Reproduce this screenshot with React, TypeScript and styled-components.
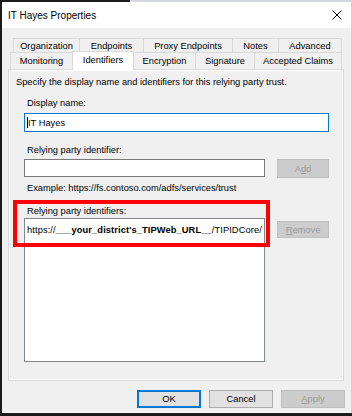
import * as React from "react";
import styled, { createGlobalStyle } from "styled-components";

const GlobalStyle = createGlobalStyle`
  html, body {
    margin: 0;
    padding: 0;
  }
  body {
    width: 352px;
    height: 416px;
    overflow: hidden;
    background: #1c1c1c;
    font-family: "Liberation Sans", Arial, sans-serif;
    color: #000;
  }
  * {
    box-sizing: border-box;
  }
`;

const Page = styled.div`
  display: flex;
  flex-direction: column;
  height: 416px;
`;

const TopStrip = styled.div`
  height: 2px;
  background: linear-gradient(to right, #1c1c1c 130px, #d4d8dc 130px);
`;

const Frame = styled.div`
  flex: 1;
  display: flex;
  padding-left: 2px;
  padding-bottom: 3px;
`;

const Window = styled.div`
  flex: 1;
  display: flex;
  flex-direction: column;
  background: #f0f0f0;
  border-right: 1px solid #d0d0d0;
  border-bottom: 1px solid #fafafa;
`;

const TitleBar = styled.div`
  height: 26px;
  background: #fff;
  display: flex;
  align-items: center;
  justify-content: space-between;
  padding: 0 9px 0 6px;
  font-size: 10px;
`;

const Body = styled.div`
  padding: 10px 7px 0 6px;
  display: flex;
  flex-direction: column;
`;

const TabRow = styled.div<{ $h: number; $indent: number }>`
  display: flex;
  align-items: flex-end;
  height: ${(p) => p.$h}px;
  padding-left: ${(p) => p.$indent}px;
`;

const Tab = styled.div<{ $w: number; $active?: boolean }>`
  width: ${(p) => p.$w + 1}px;
  margin-right: -1px;
  height: ${(p) => (p.$active ? "19px" : "100%")};
  display: flex;
  align-items: center;
  justify-content: center;
  font-size: 9.3px;
  white-space: nowrap;
  border: 1px solid #d9d9d9;
  border-bottom: none;
  background: ${(p) => (p.$active ? "#fff" : "#f0f0f0")};
  padding-bottom: ${(p) => (p.$active ? "2px" : "0")};
  position: relative;
  z-index: ${(p) => (p.$active ? 2 : 1)};
  margin-bottom: ${(p) => (p.$active ? "-1px" : "0")};
`;

const Panel = styled.div`
  height: 312px;
  border: 1px solid #d9d9d9;
  box-shadow: inset 1px 1px 0 #fff, inset -1px -1px 0 #fff;
  background: #f0f0f0;
  padding: 6px 7px 0 7px;
  font-size: 9.3px;
  display: flex;
  flex-direction: column;
`;

const Text = styled.div<{ $mt?: number; $indent?: number }>`
  line-height: 12px;
  margin-top: ${(p) => p.$mt ?? 0}px;
  margin-left: ${(p) => p.$indent ?? 0}px;
  white-space: nowrap;
`;

const Fields = styled.div`
  margin-left: 8px;
  display: flex;
  flex-direction: column;
`;

const Input = styled.div<{ $w: number; $h: number; $focus?: boolean; $mt?: number }>`
  width: ${(p) => p.$w}px;
  height: ${(p) => p.$h}px;
  margin-top: ${(p) => p.$mt ?? 0}px;
  background: #fff;
  border: 1px solid ${(p) => (p.$focus ? "#0078d7" : "#7a7a7a")};
  display: flex;
  align-items: center;
  padding-left: 2px;
  white-space: nowrap;
`;

const Caret = styled.span`
  display: inline-block;
  width: 1px;
  height: 11px;
  background: #000;
`;

const FieldRow = styled.div<{ $mt: number }>`
  display: flex;
  align-items: flex-start;
  gap: 12px;
  margin-top: ${(p) => p.$mt}px;
`;

const Button = styled.div<{ $w: number; $h: number; $mt?: number; $disabled?: boolean; $default?: boolean }>`
  width: ${(p) => p.$w}px;
  height: ${(p) => p.$h}px;
  margin-top: ${(p) => p.$mt ?? 0}px;
  display: flex;
  align-items: center;
  justify-content: center;
  font-size: 9.3px;
  background: ${(p) => (p.$disabled ? "#cccccc" : "#e1e1e1")};
  color: ${(p) => (p.$disabled ? "#9a9a9a" : "#000")};
  border: 1px solid ${(p) => (p.$disabled ? "#bfbfbf" : p.$default ? "#0078d7" : "#adadad")};
  box-shadow: ${(p) => (p.$default ? "inset 0 0 0 1px #0078d7" : "none")};
`;

const Key = styled.span`
  text-decoration: underline;
`;

const Section = styled.div`
  position: relative;
  margin-top: 11px;
  display: flex;
  flex-direction: column;
`;

const Highlight = styled.div`
  position: absolute;
  left: -11px;
  top: -5px;
  width: 257px;
  height: 47px;
  border: 4px solid #ff0000;
  pointer-events: none;
`;

const ListBox = styled.div`
  width: 241px;
  height: 144px;
  background: #fff;
  border: 1px solid #828790;
  padding: 5px 0 0 2px;
`;

const ListItem = styled.div`
  line-height: 12px;
  white-space: nowrap;
  letter-spacing: 0.1px;
`;

const Strong = styled.b`
  font-weight: bold;
`;

const ButtonRow = styled.div`
  display: flex;
  justify-content: flex-end;
  gap: 8px;
  margin-top: 9px;
  margin-right: -1px;
`;

const CloseIcon = () => (
  <svg width="10" height="10" viewBox="0 0 10 10">
    <path d="M0.5 0.5 L9.5 9.5 M9.5 0.5 L0.5 9.5" stroke="#000" strokeWidth="1" fill="none" />
  </svg>
);

const row1 = [
  { label: "Organization", w: 66 },
  { label: "Endpoints", w: 64 },
  { label: "Proxy Endpoints", w: 89 },
  { label: "Notes", w: 46 },
  { label: "Advanced", w: 63 },
];

const row2 = [
  { label: "Monitoring", w: 62 },
  { label: "Identifiers", w: 61, active: true },
  { label: "Encryption", w: 62 },
  { label: "Signature", w: 59 },
  { label: "Accepted Claims", w: 87 },
];

export default function App() {
  return (
    <>
      <GlobalStyle />
      <Page>
        <TopStrip />
        <Frame>
          <Window>
            <TitleBar>
              <span>IT Hayes Properties</span>
              <CloseIcon />
            </TitleBar>
            <Body>
              <TabRow $h={14} $indent={5}>
                {row1.map((t) => (
                  <Tab key={t.label} $w={t.w}>
                    {t.label}
                  </Tab>
                ))}
              </TabRow>
              <TabRow $h={17} $indent={2}>
                {row2.map((t) => (
                  <Tab key={t.label} $w={t.w} $active={t.active}>
                    {t.label}
                  </Tab>
                ))}
              </TabRow>
              <Panel>
                <Text>Specify the display name and identifiers for this relying party trust.</Text>
                <Fields>
                  <Text $mt={9} $indent={3}>Display name:</Text>
                  <Input $w={305} $h={19} $focus $mt={4}>
                    <Caret />
                    IT Hayes
                  </Input>
                  <Text $mt={12} $indent={3}>Relying party identifier:</Text>
                  <FieldRow $mt={3}>
                    <Input $w={241} $h={18} />
                    <Button $w={52} $h={19} $disabled>
                      A<Key>d</Key>d
                    </Button>
                  </FieldRow>
                  <Text $mt={4} $indent={3}>Example: https://fs.contoso.com/adfs/services/trust</Text>
                  <Section>
                    <Text $indent={3}>Relying party identifiers:</Text>
                    <FieldRow $mt={1}>
                      <ListBox>
                        <ListItem>
                          https://<Strong>___your_district's_TIPWeb_URL__</Strong>/TIPIDCore/
                        </ListItem>
                      </ListBox>
                      <Button $w={52} $h={17} $mt={3} $disabled>
                        <Key>R</Key>emove
                      </Button>
                    </FieldRow>
                    <Highlight />
                  </Section>
                </Fields>
              </Panel>
              <ButtonRow>
                <Button $w={64} $h={18} $default>
                  OK
                </Button>
                <Button $w={64} $h={18}>
                  Cancel
                </Button>
                <Button $w={64} $h={18} $disabled>
                  <Key>A</Key>pply
                </Button>
              </ButtonRow>
            </Body>
          </Window>
        </Frame>
      </Page>
    </>
  );
}
